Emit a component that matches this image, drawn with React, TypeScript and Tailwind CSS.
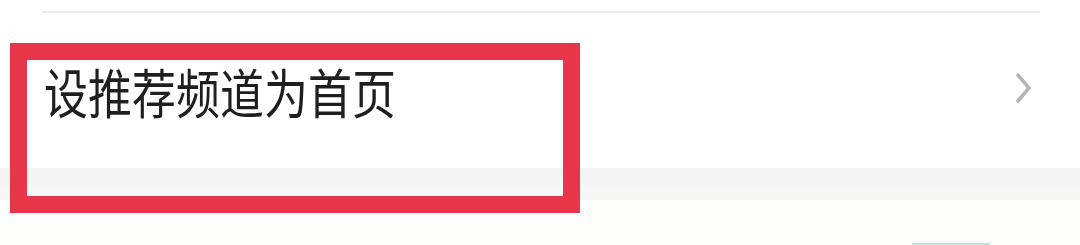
export default function App() {
  return (
    <div
      className="relative w-[1080px] h-[245px] overflow-hidden bg-white"
      style={{ fontFamily: '"Noto Sans CJK SC", "Noto Sans", sans-serif' }}
    >
      {/* divider of previous row */}
      <div className="pt-[11px]">
        <div className="ml-[42px] mr-[40px] h-[2px] bg-[#ececec]" />
      </div>

      {/* settings row */}
      <div className="flex h-[155px] items-center justify-between pl-[44px] pr-[46px]">
        <span className="inline-block origin-center scale-y-[1.22] text-[44px] leading-none text-[#1f1f1f]">
          设推荐频道为首页
        </span>
        <svg width="20" height="32" viewBox="0 0 20 32" className="-mt-[6px]">
          <path d="M4 3 L15 16 L4 29" fill="none" stroke="#b4b4b4" strokeWidth="3.5" strokeLinecap="round" strokeLinejoin="round" />
        </svg>
      </div>

      {/* section gap */}
      <div className="h-[32px] bg-gradient-to-b from-[#f3f3f3] to-[#f8f8f8]" />

      {/* next section hint */}
      <div className="relative h-[45px] bg-[#fdfdfc]">
        <div className="absolute bottom-0 left-[912px] h-[2px] w-[78px] bg-[#c4e3dc]" />
      </div>

      {/* highlight annotation */}
      <div className="pointer-events-none absolute left-[10px] top-[43px] h-[170px] w-[570px] border-[17px] border-[#e7354a]" />
    </div>
  );
}
